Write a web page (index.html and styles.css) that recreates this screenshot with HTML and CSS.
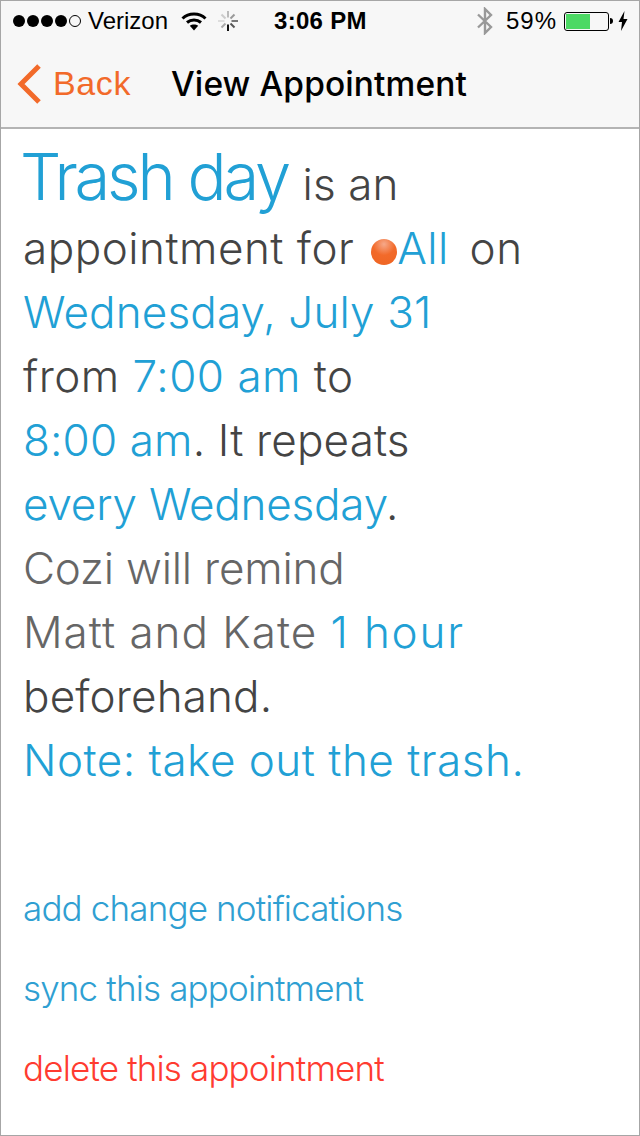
FILE: index.html
```html
<!DOCTYPE html>
<html lang="en">
<head>
<meta charset="utf-8">
<title>View Appointment</title>
<link rel="stylesheet" href="styles.css">
</head>
<body>
<div class="phone">
  <header class="topbar">
    <div class="status">
      <div class="status-left">
        <span class="signal"><i></i><i></i><i></i><i></i><i class="empty"></i></span>
        <span class="carrier">Verizon</span>
        <svg class="wifi" width="26" height="20" viewBox="0 0 26 20"><path d="M1.5 7.5C7.5 1.6 18.5 1.6 24.5 7.5" fill="none" stroke="#000" stroke-width="3"/><path d="M6 11.5C10 8 16 8 20 11.5" fill="none" stroke="#000" stroke-width="3"/><path d="M13 19.5L8.8 14.8C11 13.2 15 13.2 17.2 14.8Z" fill="#000"/></svg>
        <svg class="spinner" width="22" height="22" viewBox="0 0 22 22" stroke-width="2" fill="none"><path d="M11 14.5V21" stroke="#111"/><path d="M13.5 13.5L17.5 17.5" stroke="#555"/><path d="M14.5 11H21" stroke="#777"/><path d="M13.5 8.5L17.5 4.5" stroke="#999"/><path d="M11 7.5V1" stroke="#bbb"/><path d="M8.5 8.5L4.5 4.5" stroke="#ccc"/><path d="M7.5 11H1" stroke="#ddd"/><path d="M8.5 13.5L4.5 17.5" stroke="#aaa"/></svg>
      </div>
      <div class="clock">3:06 PM</div>
      <div class="status-right">
        <svg class="bt" width="18" height="28" viewBox="0 0 18 28"><path d="M2 7.5L15 20L9 26V2L15 8L2 20.5" fill="none" stroke="#999" stroke-width="2.4"/></svg>
        <span class="percent">59%</span>
        <span class="battery"><span class="battery-fill"></span></span>
        <span class="battery-tip"></span>
        <svg class="bolt" width="10" height="20" viewBox="0 0 10 20"><path d="M6.5 0L0.5 11H4L3 20L9.5 8H5.5Z" fill="#000"/></svg>
      </div>
    </div>
    <nav class="nav">
      <svg class="chevron" width="26" height="42" viewBox="0 0 26 42"><path d="M23 3L5 21L23 39" fill="none" stroke="#f26a2a" stroke-width="5"/></svg>
      <span class="back">Back</span>
      <span class="title">View Appointment</span>
    </nav>
  </header>
  <main class="content">
    <div class="sentence">
      <div class="line"><span class="big link">Trash day</span> is an</div>
      <div class="line mid">appointment for <span class="dot"></span><span class="link all">All</span>&nbsp; on</div>
      <div class="line link">Wednesday, July 31</div>
      <div class="line mid">from <span class="link">7:00 am</span> to</div>
      <div class="line"><span class="link">8:00 am</span>. It repeats</div>
      <div class="line tight"><span class="link">every Wednesday</span>.</div>
      <div class="line tight muted">Cozi will remind</div>
      <div class="line wide"><span class="muted">Matt and Kate</span> <span class="link">1 hour</span></div>
      <div class="line">beforehand.</div>
      <div class="line mid link">Note: take out the trash.</div>
    </div>
    <div class="actions">
      <a class="action">add change notifications</a>
      <a class="action">sync this appointment</a>
      <a class="action danger">delete this appointment</a>
    </div>
  </main>
</div>
</body>
</html>
```
FILE: styles.css
```css
* { box-sizing: border-box; }
html, body { margin: 0; padding: 0; background: #fff; }
.phone {
  width: 640px; height: 1136px; overflow: hidden;
  border: 1px solid #a6a6a6;
  font-family: Inter, "Liberation Sans", sans-serif; color: #000;
  background: #fff;
}
.topbar { height: 128px; background: #f7f7f7; border-bottom: 2px solid #b4b4b4; }
.status { height: 40px; position: relative; display: flex; align-items: center; justify-content: space-between; padding: 0 11px 0 12px; }
.status-left, .status-right { display: flex; align-items: center; }
.signal { display: flex; gap: 2px; }
.signal i { width: 12px; height: 12px; border-radius: 50%; background: #000; }
.signal i.empty { background: none; border: 1.5px solid #000; }
.carrier { font-family: "Liberation Sans", sans-serif; font-size: 24px; margin-left: 7px; }
.wifi { margin-left: 13px; }
.spinner { margin-left: 10px; }
.clock { position: absolute; left: 273px; top: 6px; font-family: "Liberation Sans", sans-serif; font-size: 24px; font-weight: 700; line-height: 28px; letter-spacing: 0.3px; }
.bt { flex: none; }
.percent { font-family: "Liberation Sans", sans-serif; font-size: 24px; margin-left: 12px; letter-spacing: 1px; }
.battery { width: 45px; height: 19px; border: 1.5px solid #000; border-radius: 3px; padding: 1px; margin-left: 7px; display: block; }
.battery-fill { display: block; width: 24px; height: 100%; background: #4cd964; }
.battery-tip { width: 3px; height: 6px; background: #000; border-radius: 0 3px 3px 0; margin-left: 1px; }
.bolt { margin-left: 5px; }
.nav { height: 86px; display: flex; align-items: center; padding: 0 0 1px 15px; }
.chevron { flex: none; margin-top: 1px; }
.back { color: #f26a2a; font-size: 34px; font-family: "Liberation Sans", sans-serif; margin-left: 11px; letter-spacing: 0.6px; }
.title { font-size: 33.5px; font-weight: 500; margin-left: 40px; letter-spacing: 0.1px; }
.content { padding: 23px 0 0 22px; font-family: Inter, sans-serif; font-weight: 300; color: #444; }
.line { font-size: 44px; line-height: 64px; height: 64px; white-space: nowrap; letter-spacing: 0.15px; }
.line.tight { letter-spacing: -0.2px; }
.line.mid { letter-spacing: 0.5px; }
.line.wide { letter-spacing: 1px; }
.line.wide .link { letter-spacing: 1.8px; }
.big { font-size: 65px; letter-spacing: -3.2px; line-height: 0; margin: 0 2px 0 -3px; }
.link { color: #21a0d5; }
.muted { color: #666; }
.dot {
  display: inline-block; width: 26px; height: 26px; border-radius: 50%; vertical-align: -1px; margin-left: 4px;
  background: radial-gradient(circle at 50% 20%, #f6a98a 0, #f26a2a 45%, #ee6422 100%);
}
.all { margin-right: -5px; }
.actions { display: flex; flex-direction: column; margin-top: 76px; }
.action { font-size: 35px; line-height: 80px; letter-spacing: -0.85px; color: #2f9fd2; }
.danger { color: #ff3b30; }
```
